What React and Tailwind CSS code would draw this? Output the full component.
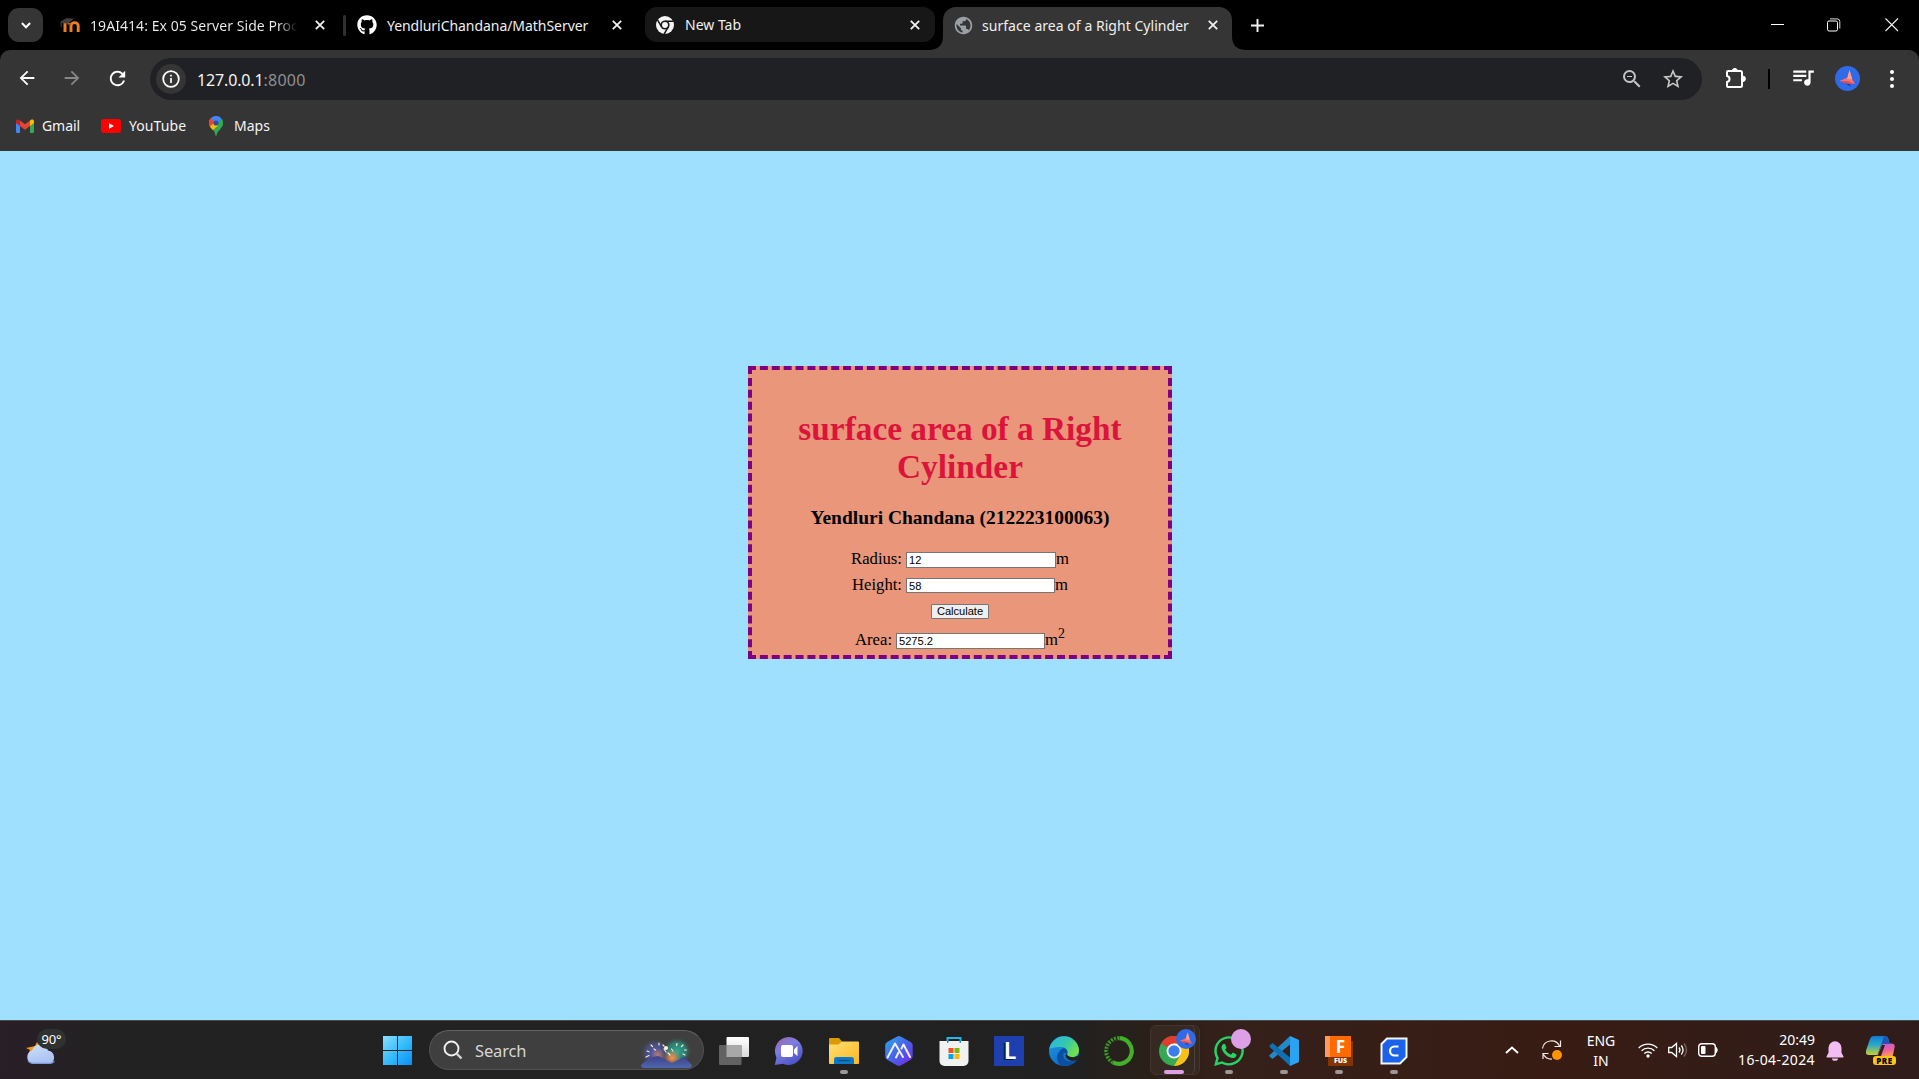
import React from "react";
import { FaGithub, FaWhatsapp } from "react-icons/fa";
import { MdPublic, MdQueueMusic, MdStarBorder, MdOutlineZoomOut, MdRefresh, MdArrowBack, MdArrowForward } from "react-icons/md";

function Cross({ className = "" }) {
  return (
    <svg viewBox="0 0 10 10" className={"h-[10px] w-[10px] shrink-0 " + className}>
      <path d="M.8.8l8.4 8.4M9.2.8L.8 9.2" stroke="#f1f1f1" strokeWidth="1.8" />
    </svg>
  );
}

function MoodleIcon() {
  return (
    <svg viewBox="0 0 20 18" className="h-[18px] w-5 shrink-0">
      <path d="M5 16V6.500" fill="none" stroke="#ee7f22" strokeWidth="3" />
      <path d="M11 16V9.800a3.600 3.200 0 0 1 7.200 0V16" fill="none" stroke="#ee7f22" strokeWidth="2.900" />
      <path d="M7.500 8.200q1.500-1.500 3.500.6" fill="none" stroke="#b8611c" strokeWidth="1.600" />
      <path d="M.5 5.600L6.500 2.300l7.500.2-4.800 4.500L3 7.500z" fill="#45403e" />
      <path d="M1.200 6v5" stroke="#5b4a3c" strokeWidth=".9" />
    </svg>
  );
}

function ChromeMono() {
  return (
    <svg viewBox="0 0 18 18" className="h-[18px] w-[18px] shrink-0">
      <circle cx="9" cy="9" r="9" fill="#f4f4f4" />
      <circle cx="9" cy="9" r="4.6" fill="#171717" />
      <circle cx="9" cy="9" r="3" fill="#f4f4f4" />
      <path d="M9 5.2h8.4M5.6 10.9L1.5 3.8M12.3 10.9L8.2 18" stroke="#171717" strokeWidth="1.5" />
    </svg>
  );
}

function Tabs() {
  return (
    <div className="flex h-[50px] items-start bg-black text-sm text-[#efefef]">
      <div className="ml-2 mt-2 flex h-[34px] w-[35px] items-center justify-center rounded-[11px] bg-[#353535]">
        <svg viewBox="0 0 10 7" className="h-[7px] w-[10px]">
          <path d="M.9 1l4.1 4.2L9.1 1" fill="none" stroke="#fff" strokeWidth="2" />
        </svg>
      </div>
      <div className="ml-[17px] flex h-[50px] w-[283px] items-center">
        <MoodleIcon />
        <div className="mt-[2px] ml-[10px] w-[210px] overflow-hidden whitespace-nowrap bg-linear-to-r from-[#efefef] from-90% to-black to-100% bg-clip-text tracking-[0.06px] text-transparent">
          19AI414: Ex 05 Server Side Proc
        </div>
        <Cross className="ml-[15px]" />
      </div>
      <div className="mt-[15px] h-[21px] w-[3px] rounded-full bg-[#303030]" />
      <div className="ml-3 flex h-[50px] w-[287px] items-center">
        <FaGithub className="-ml-px h-5 w-5 text-white" />
        <div className="mt-[2px] ml-[10px] w-[225px] whitespace-nowrap tracking-[-0.05px]">YendluriChandana/MathServer</div>
        <Cross />
      </div>
      <div className="mt-[7px] flex h-[35px] w-[290px] items-center rounded-[12px] bg-[#171717] pl-[11px]">
        <ChromeMono />
        <div className="mt-px ml-[11px] w-[225px]">New Tab</div>
        <Cross />
      </div>
      <svg viewBox="0 0 14 14" className="ml-[-6px] mt-[36px] h-[14px] w-[14px]">
        <path d="M14 0v14H0C9 14 14 9 14 0z" fill="#353535" />
      </svg>
      <div className="mt-[7px] flex h-[43px] w-[289px] items-center rounded-t-[13px] bg-[#353535] pb-[7px] pl-[11px]">
        <MdPublic className="-ml-px h-[21px] w-[21px] text-[#9aa0a6]" />
        <div className="mt-px ml-2 w-[226px] whitespace-nowrap tracking-[0.04px]">surface area of a Right Cylinder</div>
        <Cross />
      </div>
      <svg viewBox="0 0 14 14" className="mt-[36px] h-[14px] w-[14px]">
        <path d="M0 0v14h14C5 14 0 9 0 0z" fill="#353535" />
      </svg>
      <svg viewBox="0 0 13 13" className="ml-[5px] mt-[19px] h-[13px] w-[13px]">
        <path d="M6.5 0v13M0 6.5h13" stroke="#f1f1f1" strokeWidth="1.9" />
      </svg>
      <svg viewBox="0 0 14 14" className="ml-auto mr-[42px] mt-[18px] h-[14px] w-[14px]">
        <path d="M0 6.5h13" stroke="#fff" strokeWidth="1" />
      </svg>
      <svg viewBox="0 0 14 14" className="mr-[44px] mt-[18px] h-[14px] w-[14px]">
        <rect x=".5" y="3" width="10" height="10" rx="1.6" fill="none" stroke="#fff" />
        <path d="M3 .9h7.2a2.6 2.6 0 0 1 2.6 2.6v7" fill="none" stroke="#ddd" />
      </svg>
      <svg viewBox="0 0 14 14" className="mr-[20px] mt-[18px] h-[14px] w-[14px]">
        <path d="M.5.5l12.5 12.5M13 .5L.5 13" stroke="#f1f1f1" strokeWidth="1.1" />
      </svg>
    </div>
  );
}

function Bird({ className }) {
  return (
    <svg viewBox="0 0 25 25" className={className}>
      <circle cx="12.5" cy="12.5" r="12.5" fill="#2f6be8" />
      <path d="M12 13l4 8-6-4z" fill="#1b3f9e" />
      <path d="M4.5 15l8-3.5 2-7.500 2.800 9.500L20 18l-8-.6z" fill="#f4736a" />
      <path d="M14.500 4l2.800 9.500L12 13z" fill="#ff9d90" />
      <path d="M4.500 15l8 .2 7.500 2.800-8-.6z" fill="#d9485b" />
    </svg>
  );
}

function Toolbar() {
  return (
    <div className="bg-black">
      <div className="h-[101px] rounded-t-[10px] bg-[#353535]">
        <div className="flex h-[58px] items-center">
          <MdArrowBack className="mt-[-2px] ml-[16px] h-[22px] w-[22px] text-white" />
          <MdArrowForward className="mt-[-2px] ml-[23px] h-[22px] w-[22px] text-[#868686]" />
          <MdRefresh className="mt-[-2px] ml-[23px] h-[23px] w-[23px] text-white" />
          <div className="ml-[21px] flex h-[42px] w-[1552px] items-center rounded-full bg-[#202124]">
            <div className="ml-[6px] flex h-[30px] w-[30px] items-center justify-center rounded-full bg-[#353535]">
              <svg viewBox="0 0 18 18" className="h-[18px] w-[18px]">
                <circle cx="9" cy="9" r="7.8" fill="none" stroke="#fff" strokeWidth="1.8" />
                <path d="M9 8v5M9 4.8v1.8" stroke="#fff" strokeWidth="1.7" />
              </svg>
            </div>
            <div className="ml-[11px] mt-[2px] text-base">
              <span className="tracking-[-0.15px] text-[#f4f4f4]">127.0.0.1</span>
              <span className="tracking-[0.25px] text-[#8e8f92]">:8000</span>
            </div>
            <MdOutlineZoomOut className="ml-auto h-6 w-6 text-[#c3c3c3]" />
            <MdStarBorder className="ml-[17px] mr-[17px] h-6 w-6 text-[#c9c9c9]" />
          </div>
          <svg viewBox="0 0 22 22" className="mt-[-2px] ml-[23px] h-[22px] w-[22px]">
            <path d="M3 4h12.500a1.500 1.500 0 0 1 1.500 1.500v13a1.500 1.500 0 0 1-1.500 1.500H3a1 1 0 0 1-1-1v-4c3.400-.6 3.400-5.400 0-6V5a1 1 0 0 1 1-1z" fill="none" stroke="#fff" strokeWidth="2" />
            <path d="M7.200 3.400a2.700 2.700 0 0 1 5.200 0zM17.600 9a2.700 2.700 0 0 1 0 5.600z" fill="#fff" stroke="#fff" />
          </svg>
          <div className="ml-[21px] h-5 w-[2px] bg-black" />
          <MdQueueMusic className="ml-[20px] mt-[-4px] h-[26px] w-[26px] text-white" />
          <Bird className="mt-[-2px] ml-[19px] h-[25px] w-[25px]" />
          <svg viewBox="0 0 4 18" className="ml-[30px] h-[18px] w-1">
            <circle cx="2" cy="2" r="2" fill="#fff" />
            <circle cx="2" cy="9" r="2" fill="#fff" />
            <circle cx="2" cy="16" r="2" fill="#fff" />
          </svg>
        </div>
        <div className="flex h-[35px] items-center text-sm text-[#f4f4f4]">
          <svg viewBox="0 0 18 14" className="ml-4 h-[14px] w-[18px]">
            <path d="M0 1.500V12.800A1.200 1.200 0 0 0 1.200 14H4V6z" fill="#4285f4" />
            <path d="M14 6v8h2.800a1.200 1.200 0 0 0 1.200-1.200V2z" fill="#34a853" />
            <path d="M4 1.500V7l5 3.800L14 7V1.500L9 5.300z" fill="#ea4335" />
            <path d="M0 2.200V4l4 3V1.500L3.200.9C1.900 0 0 .7 0 2.200z" fill="#c5221f" />
            <path d="M18 2.200V4l-4 3V1.500l.8-.6C16.100 0 18 .7 18 2.200z" fill="#fbbc04" />
          </svg>
          <span className="ml-2 w-[39px] tracking-[-0.07px]">Gmail</span>
          <svg viewBox="0 0 20 14" className="ml-5 h-[14px] w-5">
            <rect width="20" height="14" rx="3.2" fill="#f00" />
            <path d="M8 4.200v5.600L13 7z" fill="#fff" />
          </svg>
          <span className="ml-2 w-[57px] tracking-[0.08px]">YouTube</span>
          <svg viewBox="0 0 14 20" className="ml-[23px] h-5 w-[14px]">
            <path d="M.9 10.300C3 14 5.800 14.500 6.400 19.200c.2 1 1 1 1.200 0C8.200 14.500 14 12.500 14 7z" fill="#34a853" />
            <path d="M2.300 12.200L12.800 2.800A7 7 0 0 1 13.300 10L8 14z" fill="#34a853" />
            <path d="M1.600 2.500L4.500 5l4.800 4.400L3.900 14C2 12 0 10 0 7a7 7 0 0 1 1.600-4.500z" fill="#fbbc04" />
            <path d="M1.600 2.500A7 7 0 0 1 12.600 2.700L8.800 7.200 4.900 5.400z" fill="#4285f4" />
            <path d="M1.600 2.500L5.200 5.500 4.400 7.500 1 10.500A7 7 0 0 1 1.600 2.500z" fill="#ea4335" />
            <circle cx="7" cy="7" r="2.600" fill="#2a4f9c" />
          </svg>
          <span className="ml-[11px]">Maps</span>
        </div>
      </div>
    </div>
  );
}

function Field({ label, value, unit, className }) {
  return (
    <div className="flex h-[26px] items-center justify-center">
      <span className="mt-[-3px] mr-[4px]">{label}</span>
      <input
        readOnly
        value={value}
        className={"rounded-none border border-[#767676] bg-white px-[2px] font-['Liberation_Sans',sans-serif] text-[11.1px] leading-none text-black outline-none " + className}
      />
      <span className="mt-[-3px]">{unit}</span>
    </div>
  );
}

function Page() {
  return (
    <main className="h-[869px] bg-[#9fdfff] pt-[215px] font-['Liberation_Serif',serif] text-[16.67px] leading-[20px] text-black">
      <div className="ml-[748px] h-[293px] w-[424px] border-4 border-dashed border-[#800080] bg-[#e9967a] pt-[40px] text-center">
        <h1 className="px-[40px] text-[33.33px] leading-[38px] font-bold text-[#dc143c]">surface area of a Right Cylinder</h1>
        <h3 className="mt-[21px] mb-[18px] text-[19.5px] leading-[22px] font-bold">Yendluri Chandana (212223100063)</h3>
        <Field label="Radius:" value="12" unit="m" className="h-4 w-[150px]" />
        <Field label="Height:" value="58" unit="m" className="mb-px h-[15px] w-[149px]" />
        <div className="flex h-[26px] items-center justify-center">
          <button className="mb-px h-[15px] w-[58px] rounded-[1px] border border-[#767676] bg-[#efefef] font-['Liberation_Sans',sans-serif] text-[11.1px] leading-[13px] whitespace-nowrap">Calculate</button>
        </div>
        <div className="mt-[3px]">
          <Field
            label="Area:"
            value="5275.2"
            unit={<span>m<sup className="relative top-[-7px] align-baseline text-[13.9px] leading-none">2</sup></span>}
            className="h-4 w-[149px]"
          />
        </div>
      </div>
    </main>
  );
}

function TaskIcon({ children, running, active }) {
  return (
    <div className="relative flex h-[59px] w-[55px] shrink-0 items-center justify-center pt-[2px]">
      {children}
      {running && <div className="absolute bottom-[5px] h-1 w-2 rounded-full bg-[#9c9694]" />}
      {active && <div className="absolute bottom-[5px] h-1 w-5 rounded-full bg-[#dda0e6]" />}
    </div>
  );
}

function TaskbarApps() {
  return (
    <>
      <TaskIcon>
        <svg viewBox="0 0 30 30" className="h-[30px] w-[30px]">
          <defs><linearGradient id="tv" x2="0" y2="1"><stop stopColor="#fff" /><stop offset="1" stopColor="#d9d9d9" /></linearGradient></defs>
          <rect x="7.500" y="1" width="22.500" height="20" rx="1" fill="url(#tv)" />
          <rect x="0" y="9" width="22.500" height="20" rx="1" fill="#626262" />
          <rect x="7.500" y="9" width="15" height="12" fill="#a8a8a8" />
        </svg>
      </TaskIcon>
      <TaskIcon>
        <svg viewBox="0 0 30 30" className="h-[30px] w-[30px]">
          <defs><linearGradient id="ch" x1="0" y1="0" x2=".6" y2="1"><stop stopColor="#a55fa8" /><stop offset=".45" stopColor="#7b7fe0" /><stop offset="1" stopColor="#4f52c8" /></linearGradient></defs>
          <path d="M15 1a14 14 0 1 1-6 26.800L.8 29 2.500 21.500A14 14 0 0 1 15 1z" fill="url(#ch)" />
          <rect x="7" y="9" width="12" height="12" rx="2" fill="#fff" />
          <path d="M20 13.500L23.500 10v10L20 17z" fill="#fff" />
        </svg>
      </TaskIcon>
      <TaskIcon running>
        <svg viewBox="0 0 30 30" className="h-[30px] w-[30px]">
          <defs><linearGradient id="fo" x2="1" y2="1"><stop stopColor="#ffdf77" /><stop offset="1" stopColor="#fcb91b" /></linearGradient></defs>
          <path d="M0 3a1 1 0 0 1 1-1h9l3 3.500V9H0z" fill="#dc9a06" />
          <path d="M0 8.500h9.500L13 5.500h16a1 1 0 0 1 1 1V27a1 1 0 0 1-1 1H1a1 1 0 0 1-1-1z" fill="url(#fo)" />
          <path d="M5 28v-4.500A2.500 2.500 0 0 1 7.500 21h15a2.500 2.500 0 0 1 2.500 2.500V28z" fill="#0d7ac9" />
          <path d="M8.500 24.500h13" stroke="#084f8b" strokeWidth="1.300" />
        </svg>
      </TaskIcon>
      <TaskIcon>
        <svg viewBox="0 0 30 30" className="h-[30px] w-[30px]">
          <defs><linearGradient id="ai" x2="1" y2="1"><stop stopColor="#2ea9ee" /><stop offset=".5" stopColor="#4763e8" /><stop offset="1" stopColor="#7a22e8" /></linearGradient></defs>
          <path d="M13.200.5a4 4 0 0 1 3.500 0l10 5.400A4 4 0 0 1 28.700 9.300v11a4 4 0 0 1-2 3.400l-10 5.800a4 4 0 0 1-3.500 0l-10-5.800a4 4 0 0 1-2-3.400v-11a4 4 0 0 1 2-3.400z" fill="url(#ai)" />
          <path d="M3.500 21.500l7.500-14 8 13.500M12 21.500l2.500-5M17.500 12.500L19.500 8.500 26 21" fill="none" stroke="#eef" strokeWidth="2" strokeLinecap="round" strokeLinejoin="round" />
        </svg>
      </TaskIcon>
      <TaskIcon>
        <svg viewBox="0 0 30 30" className="h-[30px] w-[30px]">
          <path d="M8.500 7V2h13v5" fill="none" stroke="#27b4e8" strokeWidth="2" />
          <path d="M.5 5h29v20a5 5 0 0 1-5 5h-19a5 5 0 0 1-5-5z" fill="#f1f1f1" />
          <path d="M8 5.700h1.500M20.500 5.700H22" stroke="#1281b8" strokeWidth="2" />
          <path d="M9.500 12h5v5h-5z" fill="#f25022" /><path d="M15.500 12h5v5h-5z" fill="#7fba00" />
          <path d="M9.500 18h5v5h-5z" fill="#00a4ef" /><path d="M15.500 18h5v5h-5z" fill="#ffb900" />
        </svg>
      </TaskIcon>
      <TaskIcon>
        <div className="flex h-[30px] w-[30px] items-center justify-center bg-[#1e3fae] pb-px pl-[2px] font-['Lato',sans-serif] text-[23px] leading-none font-bold text-white [text-shadow:-2px_1px_0_#0b2540]">L</div>
      </TaskIcon>
      <TaskIcon>
        <svg viewBox="0 0 30 30" className="h-[30px] w-[30px]">
          <defs>
            <linearGradient id="e1" x2="1" y2=".5"><stop stopColor="#2fb5ea" /><stop offset=".6" stopColor="#35c9a8" /><stop offset="1" stopColor="#72e04a" /></linearGradient>
            <linearGradient id="e2" x2=".5" y2="1"><stop stopColor="#1f9be6" /><stop offset="1" stopColor="#0f6dc6" /></linearGradient>
          </defs>
          <circle cx="15" cy="15" r="15" fill="url(#e2)" />
          <path d="M28 20.500C25 23 17 22 16.500 17c-4-3-4 14 12.200 6.500A15 15 0 0 1 12 29.600C6 26 7 15 15 12z" fill="#0c4f9f" />
          <path d="M.3 13A15 15 0 0 1 30 14c0 5-3.500 7.300-7 7.300-4 0-5.500-1.700-5-2.700 1.500-2.300.5-7.600-6-7.600C6 11 1.500 12 .3 13z" fill="url(#e1)" />
          <path d="M18 18.500c1.500 3 7 3.700 10.500 1.500l1.500 1-1.500 3c-5 2-12 0-12-5z" fill="#222" />
        </svg>
      </TaskIcon>
      <TaskIcon>
        <svg viewBox="0 0 30 30" className="h-[30px] w-[30px]">
          <path d="M15.500 2.200A12.800 12.800 0 1 1 9 26.300" fill="none" stroke="#43b02a" strokeWidth="4.200" />
          <path d="M9 26.300A12.800 12.800 0 0 1 15.500 2.200" fill="none" stroke="#3c9a27" strokeWidth="4" strokeDasharray="2 1.200" />
          <path d="M9 25A11.800 11.800 0 0 1 14 3.500" fill="none" stroke="#222" strokeWidth="1" strokeDasharray="1.500 2" />
        </svg>
      </TaskIcon>
      <TaskIcon active>
        <div className="absolute top-[5px] left-[3px] h-[50px] w-[50px] rounded-md border border-[#43352d] bg-[#352922]" />
        <div className="absolute top-[5px] left-[3px] h-[50px] w-[45px] rounded-md border-r border-[#4d4037]" />
        <svg viewBox="0 0 30 30" className="relative h-[30px] w-[30px]">
          <circle cx="15" cy="15" r="15" fill="#34a853" />
          <path d="M15 15L2 7.500A15 15 0 0 1 28 7.500H15z" fill="#e33b2e" />
          <path d="M15 7.500h13A15 15 0 0 1 15 30l6.500-11.200z" fill="#fbc116" />
          <circle cx="15" cy="15" r="7.500" fill="#fff" />
          <circle cx="15" cy="15" r="5.700" fill="#3b7ded" />
        </svg>
        <Bird className="absolute top-[9px] left-[29px] h-5 w-5" />
      </TaskIcon>
      <TaskIcon running>
        <FaWhatsapp className="h-[34px] w-[34px] text-[#25d366]" />
        <div className="absolute top-[9px] left-[29px] h-5 w-5 rounded-full bg-[#dda0e6]" />
      </TaskIcon>
      <TaskIcon running>
        <svg viewBox="0 0 30 30" className="h-[30px] w-[30px]">
          <path d="M21 0v8.500L3.500 23l-3-2.500v-1.300z" fill="#2489ca" />
          <path d="M21 30v-8.500L3.500 7 .5 9.500v1.300z" fill="#1070b3" />
          <path d="M21 0l8 3.500a1.700 1.700 0 0 1 1 1.500v20a1.700 1.700 0 0 1-1 1.500L21 30z" fill="#2aa4f2" />
        </svg>
      </TaskIcon>
      <TaskIcon running>
        <div className="relative h-[30px] w-[28px]">
          <div className="absolute top-[5px] left-[3px] h-[25px] w-[25px] bg-[#843400]" />
          <div className="absolute top-0 left-0 h-[21px] w-[26px] bg-linear-to-r from-[#ff9a5a] from-18% to-[#ff6a00] to-18%" />
          <div className="absolute top-[1px] left-[5px] w-[21px] text-center font-['Open_Sans',sans-serif] text-[17px] leading-[19px] font-bold text-white">F</div>
          <div className="absolute top-[21px] left-[3px] w-[25px] text-center font-['Open_Sans',sans-serif] text-[7px] leading-[8px] font-extrabold text-white">FUS</div>
        </div>
      </TaskIcon>
      <TaskIcon running>
        <svg viewBox="0 0 28 28" className="h-[28px] w-[28px]">
          <path d="M7 1.500h19.500V20L20 26.500H1.500V7z" fill="#1a62ea" stroke="#f3f6fa" strokeWidth="2" />
          <path d="M18.500 9.500h-4a4.500 4.500 0 0 0 0 9h4" fill="none" stroke="#fff" strokeWidth="2.200" />
        </svg>
      </TaskIcon>
    </>
  );
}

function SearchArt() {
  return (
    <svg viewBox="0 0 52 30" className="h-[30px] w-[52px]">
      <defs>
        <radialGradient id="g1"><stop stopColor="#565cb0" /><stop offset=".6" stopColor="#4b4f8c" stopOpacity=".9" /><stop offset="1" stopColor="#444" stopOpacity="0" /></radialGradient>
        <radialGradient id="g2"><stop stopColor="#2fa893" /><stop offset=".6" stopColor="#2b8276" stopOpacity=".9" /><stop offset="1" stopColor="#444" stopOpacity="0" /></radialGradient>
        <radialGradient id="g3"><stop stopColor="#ff8f4a" /><stop offset="1" stopColor="#ff8f4a" stopOpacity="0" /></radialGradient>
        <linearGradient id="g4" x2="0" y2="1"><stop stopColor="#3c3f8a" /><stop offset="1" stopColor="#5068ac" /></linearGradient>
      </defs>
      <ellipse cx="15" cy="15" rx="15" ry="15" fill="url(#g1)" />
      <ellipse cx="37" cy="13" rx="15" ry="14" fill="url(#g2)" />
      <circle cx="32" cy="20" r="9" fill="url(#g3)" />
      <circle cx="18" cy="17" r="7" fill="url(#g3)" opacity=".6" />
      <path d="M6 19l3-1.500M7 13l2 .8M11 7l1.500 1.500M19 5v2M26 14l-2-3M30 17l-2-2M33 13l-1.500-2M37 5.500l-.5 2M43 7l-1.500 1.500M46.500 12h-2M45 17l-2-1M14 11l1.500 1M23 7l1 1" stroke="#f6eccb" strokeWidth="1.200" strokeLinecap="round" />
      <path d="M1 27Q7 20 18 18l14 7 12-6 8 8q0 3-4 3H4q-3 0-3-3z" fill="url(#g4)" />
      <circle cx="26" cy="10" r="2" fill="#fff2cf" />
    </svg>
  );
}

function Taskbar() {
  return (
    <footer className="flex h-[59px] items-center bg-[linear-gradient(90deg,#291f27_0px,#222222_110px,#212121_1080px,#2a2018_1150px,#35201a_1230px,#381c14_1560px,#2f1c1a_1919px)] text-sm text-white shadow-[inset_0_1px_0_#4a4a4a]">
      <div className="relative ml-[26px] h-[59px] w-[44px]">
        <svg viewBox="0 0 30 24" className="absolute top-[22px] left-0 h-[24px] w-[30px]">
          <defs><linearGradient id="cl" x2=".4" y2="1"><stop stopColor="#cfdffb" /><stop offset="1" stopColor="#a9c2f2" /></linearGradient></defs>
          <path d="M0 6l9-2 2-4 6 8-8 4-6-1 1-3z" fill="#f29a1f" />
          <path d="M7 22a7 7 0 0 1-1-13.500A8.500 8.500 0 0 1 22 8.500 7 7 0 0 1 23.500 22z" fill="url(#cl)" />
          <path d="M2 19q3 2.500 6 2.300h15q3.500 0 5.500-2" fill="none" stroke="#7d99d8" strokeWidth="1.200" />
        </svg>
        <div className="absolute top-[9px] left-[11px] flex h-5 w-[29px] items-center justify-center rounded-full bg-[#303231] text-[13px] tracking-[-0.1px]">90°</div>
      </div>
      <svg viewBox="0 0 29 29" className="mt-[2px] ml-[313px] h-[29px] w-[29px]">
        <defs><linearGradient id="wi" x2="1" y2="1"><stop stopColor="#8adfff" /><stop offset=".5" stopColor="#36bdfb" /><stop offset="1" stopColor="#0a8df6" /></linearGradient></defs>
        <path d="M0 0h14v14H0zM15 0h14v14H15zM0 15h14v14H0zM15 15h14v14H15z" fill="url(#wi)" />
      </svg>
      <div className="mt-px ml-[17px] flex h-10 w-[275px] items-center rounded-full border border-[#515151] border-t-[#636363] bg-[#3f3f3f]">
        <svg viewBox="0 0 20 20" className="ml-[13px] h-5 w-5">
          <circle cx="8.500" cy="8.500" r="7" fill="none" stroke="#f0f0f0" strokeWidth="1.900" />
          <path d="M13.500 13.500l5 5" stroke="#d5d5d5" strokeWidth="2.400" />
        </svg>
        <span className="mt-px ml-[12px] text-[16.5px] tracking-[-0.15px] text-[#d6d6d6]">Search</span>
        <div className="mr-[11px] mt-[6px] ml-auto"><SearchArt /></div>
      </div>
      <div className="ml-[2.500px] flex"><TaskbarApps /></div>
      <svg viewBox="0 0 14 8" className="ml-auto h-[8px] w-[14px]"><path d="M1 7l6-5.500L13 7" fill="none" stroke="#fff" strokeWidth="1.900" /></svg>
      <svg viewBox="0 0 22 22" className="ml-[22px] h-[22px] w-[22px]">
        <path d="M1.500 9.500A9 9 0 0 1 18.500 7M19.500 1.500v6h-6M2 20v-5.500h5.500M2.500 15.500A9 9 0 0 0 11 20" fill="none" stroke="#f3e9e6" strokeWidth="1.200" />
        <circle cx="16" cy="16" r="5" fill="#ff9500" />
      </svg>
      <div className="ml-[18px] mb-[-3px] w-10 pb-px text-center leading-[20px]">ENG<br />IN</div>
      <svg viewBox="0 0 20 16" className="ml-[17px] h-4 w-5">
        <g fill="none" stroke="#fff" strokeWidth="1.400">
          <path d="M.7 6a13.200 13.200 0 0 1 18.600 0M3.500 8.800a9.200 9.200 0 0 1 13 0M6.300 11.600a5.200 5.200 0 0 1 7.400 0" />
        </g>
        <circle cx="10" cy="14" r="1.700" fill="#fff" />
      </svg>
      <svg viewBox="0 0 20 16" className="ml-[10px] h-4 w-5">
        <g fill="none" stroke="#fff" strokeWidth="1.300">
          <path d="M.7 5.500h3L8.500 1.500v13l-4.800-4h-3zM11 5.500q2 2.500 0 5M13.300 3.500q3.600 4.500 0 9" />
          <path d="M16 1.500q5 6.500 0 13" stroke="#7a6661" />
        </g>
      </svg>
      <svg viewBox="0 0 20 14" className="ml-[10px] h-[14px] w-5">
        <rect x=".7" y=".7" width="16.600" height="12.600" rx="3" fill="none" stroke="#fff" strokeWidth="1.400" />
        <rect x="3" y="3" width="4.500" height="8" rx="1" fill="#fff" />
        <path d="M18.500 4.500q1.500 2.500 0 5z" fill="#fff" stroke="#fff" />
      </svg>
      <div className="mr-px ml-[17px] w-20 text-right leading-[20px]">
        <div>20:49</div>
        <div className="tracking-[0.39px]">16-04-2024</div>
      </div>
      <svg viewBox="0 0 18 20" className="mt-[2px] ml-[10px] h-5 w-[18px]">
        <path d="M9 .3a6.500 6.500 0 0 1 6.500 6.500v5l2 3.700q.3 1-.8 1H1.300q-1.100 0-.8-1l2-3.700v-5A6.500 6.500 0 0 1 9 .3zM6 17.500h6a3 2.300 0 0 1-6 0z" fill="#f1bdf3" />
      </svg>
      <div className="relative mt-[2px] mr-[23px] ml-[22px] h-[29px] w-[30px]">
        <svg viewBox="0 0 29 24" className="h-6 w-[29px]">
          <defs>
            <linearGradient id="c1" x2="0" y2="1"><stop stopColor="#1478d8" /><stop offset=".45" stopColor="#27a8c8" /><stop offset="1" stopColor="#c8cf2d" /></linearGradient>
            <linearGradient id="c2" x2=".3" y2="1"><stop stopColor="#a763e8" /><stop offset=".6" stopColor="#ef5fa0" /><stop offset="1" stopColor="#f79a5b" /></linearGradient>
          </defs>
          <path d="M8 0h11q2.500 0 3.500 3l1 4h-5q-3 0-4 3.500L11.500 19H3q-4 0-3-4.500L4 3Q5 0 8 0z" fill="url(#c1)" />
          <path d="M18 7.500h7.500q4 0 3 4.500l-2 9H11l4-11q.8-2.500 3-2.500z" fill="url(#c2)" />
          <path d="M18 0q3 0 4 3l1.500 4.500h-6q-2 .5-2.500 2z" fill="#1c55b8" />
          <path d="M16 9h3l-4 11h-3.500z" fill="#35201b" />
        </svg>
        <div className="absolute top-[20px] left-[7px] h-[9px] w-[23px] rounded-[3px] bg-[#fcc419] text-center font-['Open_Sans',sans-serif] text-[8px] leading-[9px] font-extrabold tracking-[0.5px] text-black">PRE</div>
      </div>
    </footer>
  );
}

export default function App() {
  return (
    <div className="h-[1079px] w-[1919px] overflow-hidden font-['Noto_Sans',sans-serif]">
      <Tabs />
      <Toolbar />
      <Page />
      <Taskbar />
    </div>
  );
}
